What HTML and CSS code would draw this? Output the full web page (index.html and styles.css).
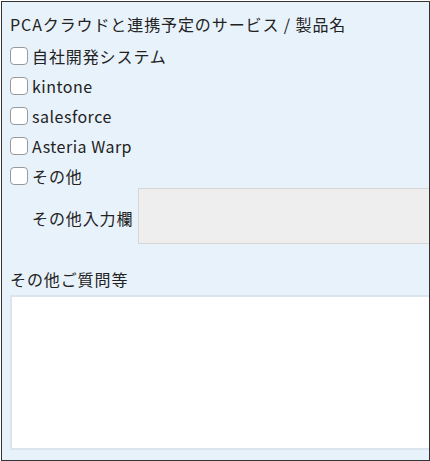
FILE: index.html
```html
<!DOCTYPE html>
<html lang="ja">
<head>
<meta charset="utf-8">
<link rel="stylesheet" href="styles.css">
</head>
<body>
<div class="frame">
  <div class="group">
    <div class="title">PCAクラウドと連携予定のサービス / 製品名</div>
    <label class="opt"><span class="box"></span><span>自社開発システム</span></label>
    <label class="opt"><span class="box"></span><span class="latin">kintone</span></label>
    <label class="opt"><span class="box"></span><span class="latin">salesforce</span></label>
    <label class="opt"><span class="box"></span><span class="latin">Asteria Warp</span></label>
    <label class="opt"><span class="box"></span><span>その他</span></label>
    <div class="other">
      <span class="other-label">その他入力欄</span>
      <div class="other-input"></div>
    </div>
  </div>
  <div class="group2">
    <div class="title2">その他ご質問等</div>
    <div class="textarea"></div>
  </div>
</div>
</body>
</html>
```
FILE: styles.css
```css
html, body {
  margin: 0;
  padding: 0;
  background: #ffffff;
}
.frame {
  margin: 1px 0 0 1px;
  width: 429px;
  height: 460px;
  box-sizing: border-box;
  border: 1px solid #333333;
  background: #e8f2fb;
  overflow: hidden;
  font-family: "Noto Sans CJK JP", "Noto Sans", sans-serif;
  font-size: 16px;
  letter-spacing: 0.9px;
  color: #222222;
}
.group {
  padding: 8px 0 0 8px;
}
.title {
  height: 31px;
  line-height: 28px;
}
.opt {
  display: flex;
  align-items: center;
  height: 30px;
  gap: 4px;
}
.latin {
  letter-spacing: 0.5px;
}
.box {
  width: 16px;
  height: 16px;
  border: 1px solid #9a9a9a;
  border-radius: 4px;
  background: #ffffff;
  flex: none;
}
.other {
  display: flex;
  align-items: center;
  margin-top: -3px;
  padding-left: 22px;
  gap: 5px;
}
.other-label {
  flex: none;
  padding-top: 3px;
}
.other-input {
  flex: none;
  width: 320px;
  height: 54px;
  background: #eeeeee;
  border: 1px solid #d6d6d6;
}
.group2 {
  padding: 21px 0 0 8px;
}
.title2 {
  height: 30px;
  line-height: 28px;
}
.textarea {
  width: 440px;
  height: 151px;
  background: #ffffff;
  border: 2px solid #dce5ef;
}
```
